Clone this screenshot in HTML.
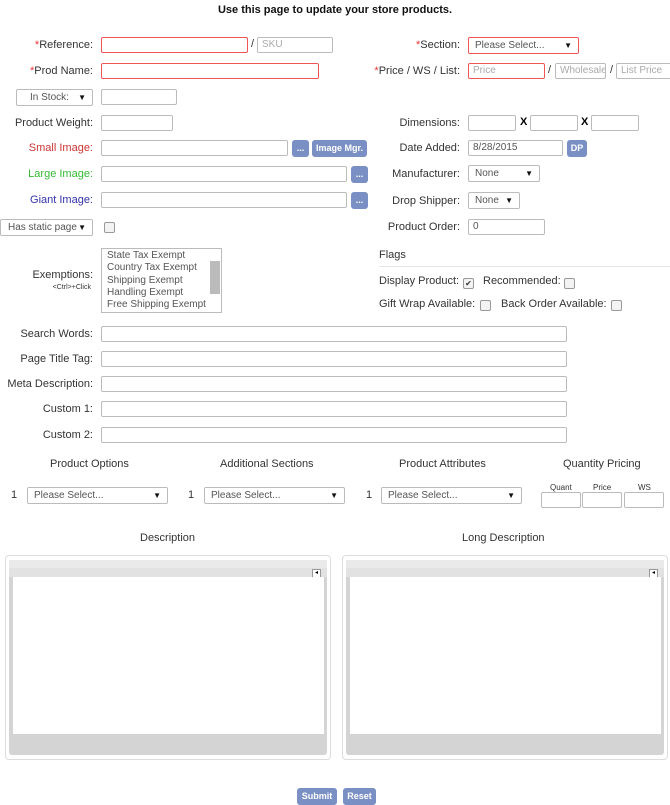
<!DOCTYPE html>
<html><head><meta charset="utf-8"><style>
body{margin:0;width:670px;height:805px;background:#fff;font-family:"Liberation Sans",Arial,sans-serif;font-size:11px;color:#333;position:relative;overflow:hidden}
.a{position:absolute}
.l{position:absolute;text-align:right;white-space:nowrap;margin-top:1px}
.i{position:absolute;box-sizing:border-box;border:1px solid #bbb;border-radius:2px;height:16px;background:#fff;font-size:10px;color:#aaa;padding:1px 4px;white-space:nowrap;overflow:hidden}
.r{border-color:#e55}
.s{position:absolute;box-sizing:border-box;border:1px solid #bbb;border-radius:2px;height:17px;background:#fff;font-size:10px;color:#555;padding:2px 6px;white-space:nowrap}
.s:after{content:"▼";position:absolute;right:6px;top:3px;font-size:8px;color:#111}
.b{position:absolute;background:#7a8fc3;color:#fff;font-weight:bold;font-size:9px;border-radius:3px;text-align:center;line-height:17px;height:17px}
.c{position:absolute;width:9px;height:9px;border:1px solid #999;border-radius:2px;background:#f3f3f3}
.red{color:#e33}
.ed{position:absolute;top:555px;width:326px;height:205px;box-sizing:border-box;border:1px solid #ddd;border-radius:4px;background:#fff}
.ed .g{position:absolute;left:3px;top:4px;right:3px;bottom:4px;background:#d4d4d4;border-radius:3px}
.ed .t{position:absolute;left:0;right:0;top:0;height:8px;background:#eaeaea}
.ed .t2{position:absolute;left:0;right:0;top:8px;height:9px;background:#e2e2e2}
.ed .w{position:absolute;left:4px;right:3px;top:17px;height:157px;background:#fff}
.ed .k{position:absolute;right:6px;top:9px;width:7px;height:7px;border:1px solid #999;background:#fff;font-size:6px;line-height:7px;text-align:center;color:#000}
</style></head><body>
<div class="a" style="left:0;width:670px;top:4px;text-align:center;font-weight:bold;color:#111">Use this page to update your store products.</div>

<div class="l" style="right:577px;top:38px"><span class="red">*</span>Reference:</div>
<div class="i r" style="left:101px;top:37px;width:147px"></div>
<div class="a" style="left:251px;top:38px">/</div>
<div class="i" style="left:257px;top:37px;width:76px">SKU</div>

<div class="l" style="right:577px;top:64px"><span class="red">*</span>Prod Name:</div>
<div class="i r" style="left:101px;top:63px;width:218px"></div>

<div class="s" style="left:16px;top:89px;width:77px;padding-left:13px">In Stock:</div>
<div class="i" style="left:101px;top:89px;width:76px"></div>

<div class="l" style="right:577px;top:116px">Product Weight:</div>
<div class="i" style="left:101px;top:115px;width:72px"></div>

<div class="l red" style="right:577px;top:141px;color:#c33">Small Image:</div>
<div class="i" style="left:101px;top:140px;width:187px"></div>
<div class="b" style="left:292px;top:140px;width:17px">...</div>
<div class="b" style="left:312px;top:140px;width:55px">Image Mgr.</div>

<div class="l" style="right:577px;top:167px;color:#3b3">Large Image:</div>
<div class="i" style="left:101px;top:166px;width:246px"></div>
<div class="b" style="left:351px;top:166px;width:17px">...</div>

<div class="l" style="right:577px;top:193px;color:#33a">Giant Image:</div>
<div class="i" style="left:101px;top:192px;width:246px"></div>
<div class="b" style="left:351px;top:192px;width:17px">...</div>

<div class="s" style="left:0;top:219px;width:93px;padding-left:7px">Has static page</div>
<div class="c" style="left:104px;top:222px"></div>

<div class="a" style="left:101px;top:248px;width:121px;height:65px;box-sizing:border-box;border:1px solid #bbb;font-size:10px;color:#555;line-height:12.3px;padding:1px 5px">State Tax Exempt<br>Country Tax Exempt<br>Shipping Exempt<br>Handling Exempt<br>Free Shipping Exempt
<div class="a" style="right:1px;top:12px;width:10px;height:33px;background:#bbb"></div></div>
<div class="l" style="right:577px;top:268px">Exemptions:</div>
<div class="l" style="right:579px;top:283px;font-size:7px">&lt;Ctrl&gt;+Click</div>

<div class="l" style="right:210px;top:38px"><span class="red">*</span>Section:</div>
<div class="s r" style="left:468px;top:37px;width:111px;border-color:#e55">Please Select...</div>
<div class="l" style="right:210px;top:64px"><span class="red">*</span>Price / WS / List:</div>
<div class="i r" style="left:468px;top:63px;width:77px">Price</div>
<div class="a" style="left:548px;top:64px">/</div>
<div class="i" style="left:555px;top:63px;width:51px">Wholesale</div>
<div class="a" style="left:610px;top:64px">/</div>
<div class="i" style="left:616px;top:63px;width:60px">List Price</div>

<div class="l" style="right:210px;top:116px">Dimensions:</div>
<div class="i" style="left:468px;top:115px;width:48px"></div>
<div class="a" style="left:520px;top:116px;font-weight:bold;color:#000">X</div>
<div class="i" style="left:530px;top:115px;width:48px"></div>
<div class="a" style="left:581px;top:116px;font-weight:bold;color:#000">X</div>
<div class="i" style="left:591px;top:115px;width:48px"></div>

<div class="l" style="right:210px;top:141px">Date Added:</div>
<div class="i" style="left:468px;top:140px;width:95px;color:#555">8/28/2015</div>
<div class="b" style="left:567px;top:140px;width:20px">DP</div>

<div class="l" style="right:210px;top:167px">Manufacturer:</div>
<div class="s" style="left:468px;top:165px;width:72px">None</div>
<div class="l" style="right:210px;top:194px">Drop Shipper:</div>
<div class="s" style="left:468px;top:192px;width:52px">None</div>
<div class="l" style="right:210px;top:220px">Product Order:</div>
<div class="i" style="left:468px;top:219px;width:77px;color:#555">0</div>

<div class="a" style="left:379px;top:249px">Flags</div>
<div class="a" style="left:379px;top:266px;width:291px;height:1px;background:#e6e6e6"></div>
<div class="a" style="left:379px;top:275px">Display Product:</div>
<div class="c" style="left:463px;top:278px;font-size:8px;line-height:9px;text-align:center;color:#333">✔</div>
<div class="a" style="left:483px;top:275px">Recommended:</div>
<div class="c" style="left:564px;top:278px"></div>
<div class="a" style="left:379px;top:298px">Gift Wrap Available:</div>
<div class="c" style="left:480px;top:300px"></div>
<div class="a" style="left:501px;top:298px">Back Order Available:</div>
<div class="c" style="left:611px;top:300px"></div>

<div class="l" style="right:577px;top:327px">Search Words:</div>
<div class="i" style="left:101px;top:326px;width:466px"></div>
<div class="l" style="right:577px;top:352px">Page Title Tag:</div>
<div class="i" style="left:101px;top:351px;width:466px"></div>
<div class="l" style="right:577px;top:377px">Meta Description:</div>
<div class="i" style="left:101px;top:376px;width:466px"></div>
<div class="l" style="right:577px;top:402px">Custom 1:</div>
<div class="i" style="left:101px;top:401px;width:466px"></div>
<div class="l" style="right:577px;top:428px">Custom 2:</div>
<div class="i" style="left:101px;top:427px;width:466px"></div>

<div class="a" style="left:50px;top:458px">Product Options</div>
<div class="a" style="left:220px;top:458px">Additional Sections</div>
<div class="a" style="left:399px;top:458px">Product Attributes</div>
<div class="a" style="left:563px;top:458px">Quantity Pricing</div>
<div class="a" style="left:11px;top:489px">1</div>
<div class="s" style="left:27px;top:487px;width:141px">Please Select...</div>
<div class="a" style="left:188px;top:489px">1</div>
<div class="s" style="left:204px;top:487px;width:141px">Please Select...</div>
<div class="a" style="left:366px;top:489px">1</div>
<div class="s" style="left:381px;top:487px;width:141px">Please Select...</div>
<div class="a" style="left:550px;top:483px;font-size:8px">Quant</div>
<div class="a" style="left:593px;top:483px;font-size:8px">Price</div>
<div class="a" style="left:638px;top:483px;font-size:8px">WS</div>
<div class="i" style="left:541px;top:492px;width:40px"></div>
<div class="i" style="left:582px;top:492px;width:40px"></div>
<div class="i" style="left:624px;top:492px;width:40px"></div>

<div class="a" style="left:140px;top:532px">Description</div>
<div class="a" style="left:462px;top:532px">Long Description</div>
<div class="ed" style="left:5px"><div class="g"><div class="t"></div><div class="t2"></div><div class="k">◂</div><div class="w"></div></div></div>
<div class="ed" style="left:342px"><div class="g"><div class="t"></div><div class="t2"></div><div class="k">◂</div><div class="w"></div></div></div>

<div class="b" style="left:297px;top:788px;width:40px;font-size:9px">Submit</div>
<div class="b" style="left:343px;top:788px;width:33px;font-size:9px">Reset</div>
</body></html>
